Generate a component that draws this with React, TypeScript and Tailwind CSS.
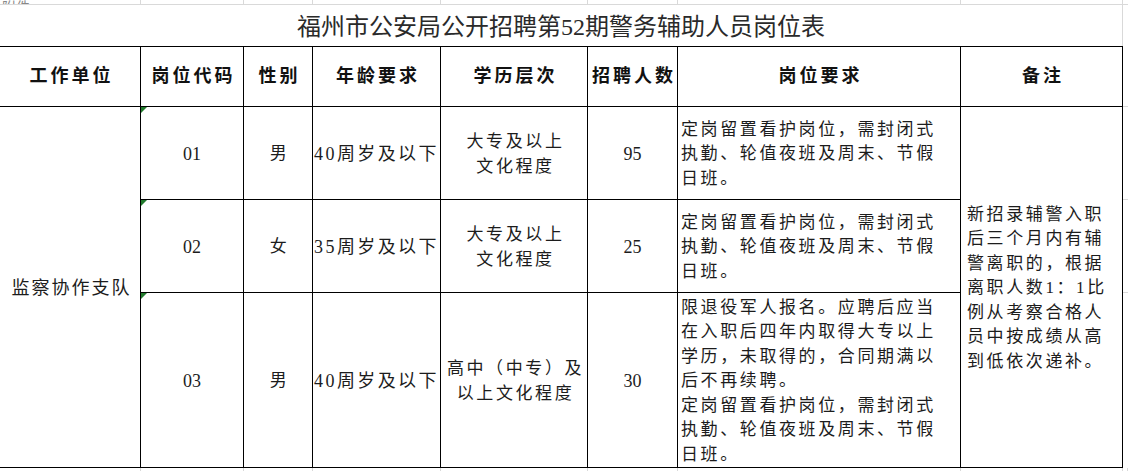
import React from 'react'

const FONT = { fontFamily: "'Liberation Serif', 'Noto Sans CJK SC', serif" }

const COLS = 'grid grid-cols-[141px_103px_69px_128px_147px_90px_283px_162px]'

const headers = ['工作单位', '岗位代码', '性别', '年龄要求', '学历层次', '招聘人数', '岗位要求', '备注']

const dutyShort = ['定岗留置看护岗位，需封闭式', '执勤、轮值夜班及周末、节假', '日班。']

const rows = [
  { code: '01', sex: '男', age: '40周岁及以下', edu: ['大专及以上', '文化程度'], num: '95', req: dutyShort },
  { code: '02', sex: '女', age: '35周岁及以下', edu: ['大专及以上', '文化程度'], num: '25', req: dutyShort },
  {
    code: '03',
    sex: '男',
    age: '40周岁及以下',
    edu: ['高中（中专）及', '以上文化程度'],
    num: '30',
    req: [
      '限退役军人报名。应聘后应当',
      '在入职后四年内取得大专以上',
      '学历，未取得的，合同期满以',
      '后不再续聘。',
      ...dutyShort,
    ],
  },
]

const note = ['新招录辅警入职', '后三个月内有辅', '警离职的，根据', '离职人数1：1比', '例从考察合格人', '员中按成绩从高', '到低依次递补。']

const cell = 'border-r border-b border-black flex items-center'
const body = 'text-[17px] leading-[24.5px] tracking-[2.6px] text-[#1c1c1c]'
const num = 'text-[18px] text-[#1c1c1c] justify-center pt-[3px]'

const Lines = ({ lines }: { lines: string[] }) => (
  <div>
    {lines.map((l, i) => (
      <div key={i} className="whitespace-nowrap">
        {l}
      </div>
    ))}
  </div>
)

const GridStrip = ({ h }: { h: string }) => (
  <div className="flex">
    <div className={`${COLS} ${h}`}>
      {headers.map((_, i) => (
        <div key={i} className="border-r border-[#d9d9d9]" />
      ))}
    </div>
    <div className="w-[5px] border-r border-[#d9d9d9]" />
  </div>
)

export default function App() {
  return (
    <div className="w-[1128px] h-[471px] bg-white overflow-hidden" style={FONT}>
      {/* sheet strip above the table */}
      <div className="flex h-[5px] border-b border-[#d9d9d9]">
        <div className={`${COLS} h-[4px]`}>
          <div className="border-r border-[#d9d9d9] overflow-hidden flex items-end pl-[2px]">
            <span className="text-[14px] leading-[14px] text-[#888] translate-y-[11px]">附件</span>
          </div>
          {headers.slice(1).map((_, i) => (
            <div key={i} className="border-r border-[#d9d9d9]" />
          ))}
        </div>
      </div>

      {/* title */}
      <div className="flex h-[41px]">
        <div className="w-[1123px] border-r border-[#d9d9d9] flex items-end justify-center pb-[4px]">
          <span className="text-[24px] leading-[30px] text-[#2a2a2a]">福州市公安局公开招聘第52期警务辅助人员岗位表</span>
        </div>
        <div className="w-[5px]" />
      </div>

      <div className="flex">
        <div className={`${COLS} grid-rows-[60px_93px_93px_175px] border-t border-black`}>
          {headers.map((h) => (
            <div
              key={h}
              className={`${cell} justify-center pl-[3px] text-[18px] font-bold tracking-[3px] text-[#111]`}
            >
              {h}
            </div>
          ))}

          <div className={`${cell} row-span-3 justify-center pl-[3px] pt-[3px] ${body} text-[18px] tracking-[2px]`}>
            监察协作支队
          </div>

          {rows.map((r, i) => (
            <React.Fragment key={r.code}>
              <div className={`${cell} ${num} relative`}>
                <span className="absolute left-0 top-0 w-0 h-0 border-t-[6px] border-r-[6px] border-t-[#217a2c] border-r-transparent" />
                {r.code}
              </div>
              <div className={`${cell} ${body} justify-center pl-[3px] pt-[3px]`}>{r.sex}</div>
              <div className={`${cell} justify-center pt-[3px] text-[18px] text-[#1c1c1c]`}>
                <span className="whitespace-nowrap tracking-[2.4px]">{r.age}</span>
              </div>
              <div className={`${cell} ${body} justify-center text-center pl-[3px] pt-[3px]`}>
                <Lines lines={r.edu} />
              </div>
              <div className={`${cell} ${num}`}>{r.num}</div>
              <div className={`${cell} ${body} pl-[3px] pt-[3px]`}>
                <Lines lines={r.req} />
              </div>
              {i === 0 && (
                <div className={`${cell} row-span-3 ${body} pl-[6px] pt-[3px] tracking-[2.3px]`}>
                  <Lines lines={note} />
                </div>
              )}
            </React.Fragment>
          ))}
        </div>
        <div className="w-[5px] flex flex-col">
          <div className="h-[61px] border-b border-[#d9d9d9]" />
          <div className="h-[93px] border-b border-[#d9d9d9]" />
          <div className="h-[93px] border-b border-[#d9d9d9]" />
          <div className="h-[175px]" />
        </div>
      </div>

      {/* sheet strip below the table */}
      <GridStrip h="h-[3px]" />
    </div>
  )
}
